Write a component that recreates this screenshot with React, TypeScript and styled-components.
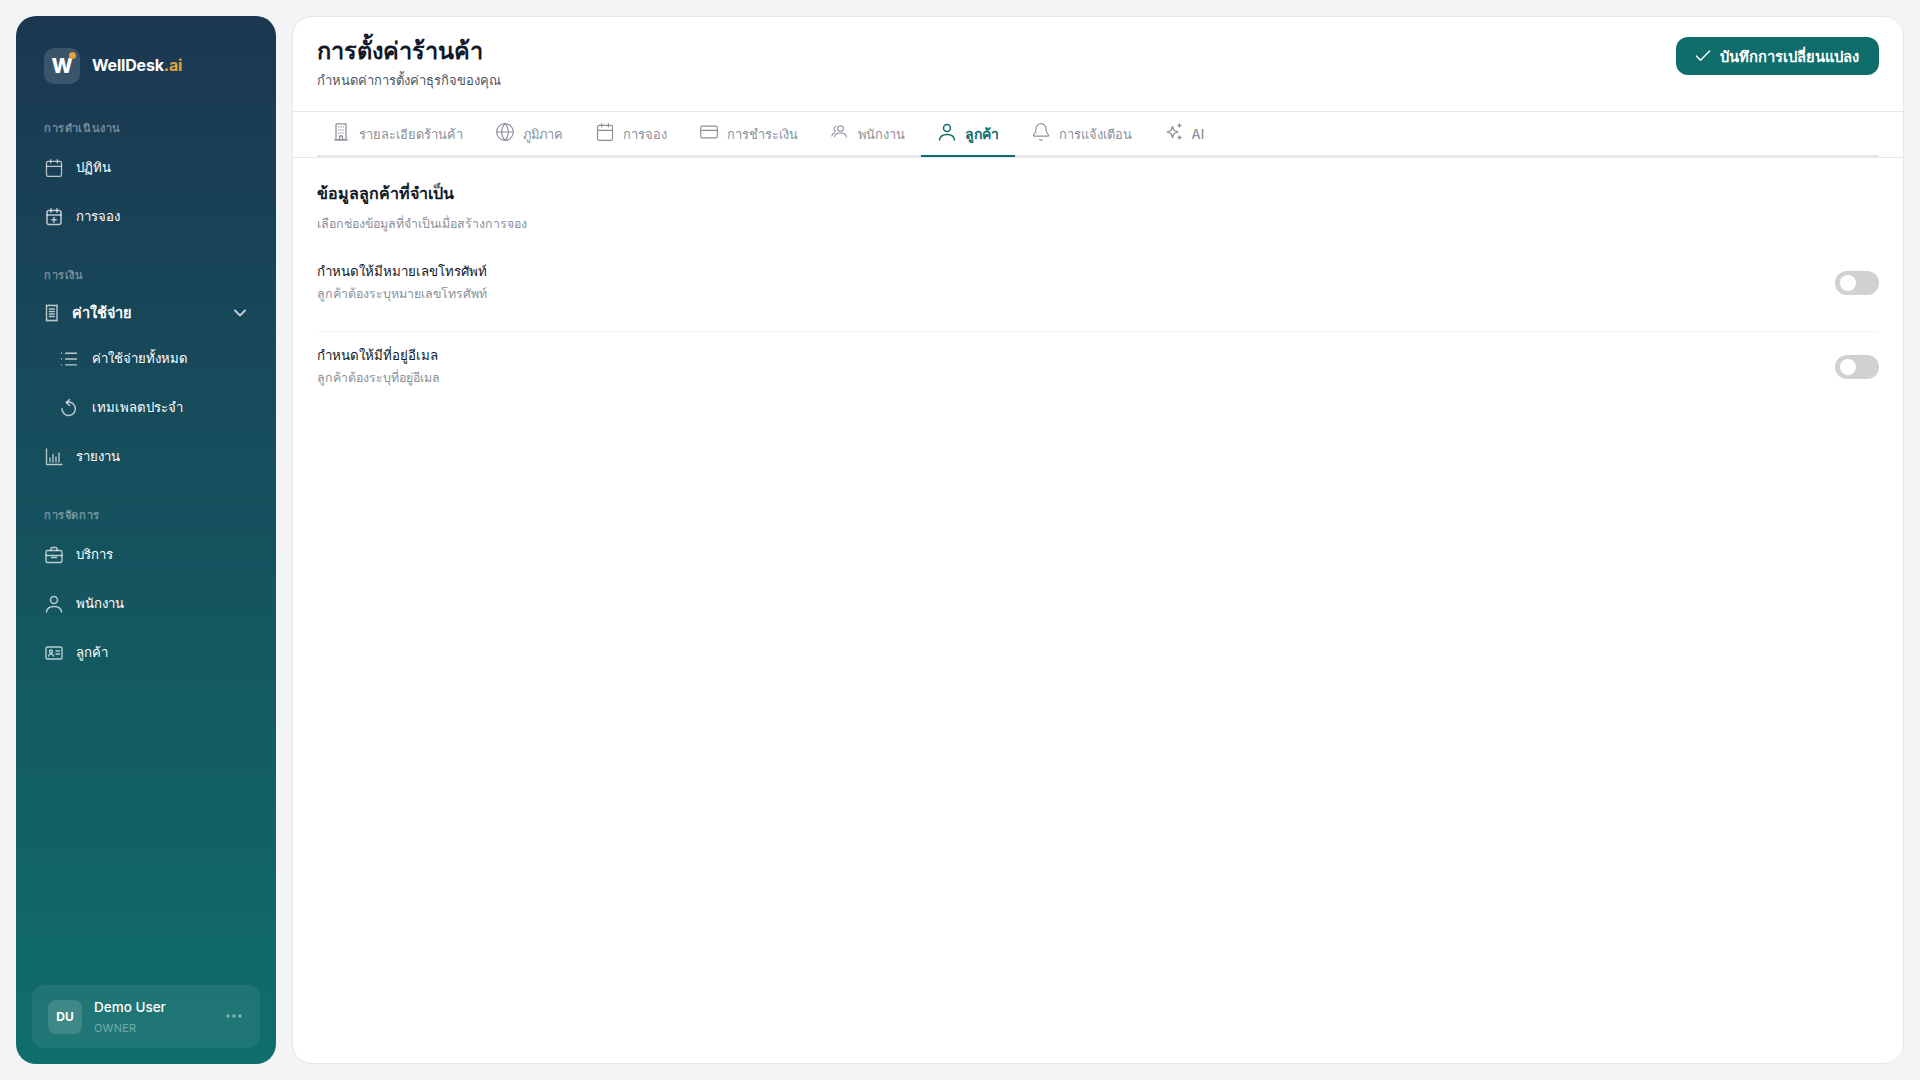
import React from "react";
import styled, { createGlobalStyle } from "styled-components";
import { Calendar, ChevronDown, List, Globe, CreditCard, Bell, Check, MoreHorizontal } from "lucide-react";

const Global = createGlobalStyle`
  * { box-sizing: border-box; }
  html, body { margin: 0; height: 100%; }
  body { background: #f3f4f6; font-family: Inter, "Noto Sans", sans-serif; }
`;

const Page = styled.div`
  display: flex;
  gap: 16px;
  height: 1080px;
  padding: 16px;
`;

const Sidebar = styled.aside`
  width: 260px;
  flex: none;
  border-radius: 20px;
  background: linear-gradient(180deg, #1b3751 0%, #0f6e6c 100%);
  display: flex;
  flex-direction: column;
  padding: 32px 16px 16px;
  color: #fff;
`;

const Brand = styled.div`
  display: flex;
  align-items: center;
  gap: 12px;
  padding-left: 12px;
  margin-bottom: 12px;
`;

const LogoBox = styled.div`
  position: relative;
  width: 36px;
  height: 36px;
  border-radius: 10px;
  background: rgba(255, 255, 255, 0.14);
  display: flex;
  align-items: center;
  justify-content: center;
  font-weight: 800;
  font-size: 20px;
  color: #fff;
`;

const LogoDot = styled.span`
  position: absolute;
  top: 4px;
  right: 4px;
  width: 7px;
  height: 7px;
  border-radius: 50%;
  background: #e0a33e;
`;

const BrandName = styled.div`
  font-size: 16px;
  font-weight: 700;
  letter-spacing: -0.2px;
  margin-top: -2px;
`;

const BrandAccent = styled.span`
  color: #e0a33e;
`;

const SectionLabel = styled.div`
  font-size: 11px;
  font-weight: 600;
  letter-spacing: 0.6px;
  color: rgba(255, 255, 255, 0.4);
  padding-left: 12px;
  margin: 22px 0 7px;
  line-height: 20px;
`;

const NavRow = styled.div<{ $sub?: boolean; $parent?: boolean }>`
  display: flex;
  align-items: center;
  height: ${(p) => (p.$parent ? "41px" : "45px")};
  margin-bottom: ${(p) => (p.$parent ? "3px" : "4px")};
  padding-left: ${(p) => (p.$sub ? "27px" : "12px")};
  gap: ${(p) => (p.$parent ? "8px" : p.$sub ? "13px" : "12px")};
  font-size: ${(p) => (p.$parent ? "14.5px" : "13.2px")};
  font-weight: ${(p) => (p.$parent ? 700 : 500)};
  color: #fff;
  & > svg:first-child {
    flex: none;
    color: rgba(255, 255, 255, 0.7);
  }
`;

const NavChevron = styled.span`
  margin-left: auto;
  margin-right: 10px;
  display: flex;
  color: rgba(255, 255, 255, 0.7);
`;

const UserCard = styled.div`
  margin-top: auto;
  height: 63px;
  border-radius: 12px;
  background: rgba(255, 255, 255, 0.07);
  display: flex;
  align-items: center;
  gap: 12px;
  padding: 0 16px;
`;

const Avatar = styled.div`
  width: 34px;
  height: 34px;
  border-radius: 8px;
  background: rgba(255, 255, 255, 0.14);
  display: flex;
  align-items: center;
  justify-content: center;
  font-size: 12px;
  font-weight: 700;
`;

const UserText = styled.div`
  flex: 1;
`;

const UserName = styled.div`
  font-size: 13.5px;
  font-weight: 500;
  line-height: 20px;
`;

const UserRole = styled.div`
  font-size: 11px;
  line-height: 18px;
  letter-spacing: 0.2px;
  color: rgba(255, 255, 255, 0.4);
  margin-top: 2px;
`;

const Dots = styled.span`
  display: flex;
  color: rgba(255, 255, 255, 0.45);
  margin-top: -2px;
`;

const Main = styled.main`
  flex: 1;
  background: #fff;
  border: 1px solid #e5e7eb;
  border-radius: 20px;
  display: flex;
  flex-direction: column;
  overflow: hidden;
`;

const Header = styled.header`
  height: 95px;
  flex: none;
  padding: 18px 24px 0;
  display: flex;
  justify-content: space-between;
  align-items: flex-start;
  border-bottom: 1px solid #e5e7eb;
`;

const Title = styled.h1`
  margin: 0;
  font-size: 23.5px;
  line-height: 32px;
  font-weight: 700;
  color: #111827;
`;

const Subtitle = styled.p`
  margin: 4px 0 0;
  font-size: 13px;
  line-height: 18px;
  color: #4b5563;
`;

const SaveButton = styled.button`
  width: 203px;
  height: 38px;
  margin-top: 2px;
  padding: 0 4px 0 0;
  border: none;
  border-radius: 12px;
  background: #0f6e6c;
  color: #fff;
  font: inherit;
  font-size: 14.7px;
  font-weight: 600;
  display: flex;
  align-items: center;
  justify-content: center;
  gap: 7px;
`;

const TabsBar = styled.div`
  flex: none;
  border-bottom: 1px solid #e5e7eb;
  height: 46px;
`;

const TabsRail = styled.div`
  display: flex;
  height: 45px;
  margin: 0 24px;
  border-bottom: 2px solid #e5e7eb;
`;

const Tab = styled.div<{ $active?: boolean }>`
  display: flex;
  align-items: center;
  gap: 8px;
  height: 45px;
  padding: 0 16px;
  font-size: ${(p) => (p.$active ? "14px" : "12.9px")};
  font-weight: ${(p) => (p.$active ? 700 : 500)};
  color: ${(p) => (p.$active ? "#0f6e6c" : "#8b919b")};
  border-bottom: 2px solid ${(p) => (p.$active ? "#0f6e6c" : "transparent")};
  &:first-child {
    margin-left: -2.5px;
  }
  & > svg {
    flex: none;
    margin-top: -3px;
  }
`;

const TabLabel = styled.span<{ $active?: boolean }>`
  padding-top: ${(p) => (p.$active ? "0" : "1px")};
`;

const Content = styled.section`
  padding: 23px 24px;
`;

const SectionTitle = styled.h2`
  margin: 0;
  font-size: 16px;
  line-height: 24px;
  font-weight: 700;
  color: #111827;
`;

const SectionDesc = styled.p`
  margin: 9px 0 14px;
  font-size: 12.4px;
  line-height: 20px;
  color: #8b919b;
`;

const SettingRow = styled.div<{ $last?: boolean }>`
  display: flex;
  align-items: center;
  justify-content: space-between;
  padding: 13px 0 ${(p) => (p.$last ? "13px" : "27px")};
  border-bottom: ${(p) => (p.$last ? "none" : "1px solid #f3f4f6")};
`;

const RowLabel = styled.div`
  font-size: 13.3px;
  line-height: 20px;
  font-weight: 500;
  color: #111827;
`;

const RowDesc = styled.div`
  font-size: 12.4px;
  line-height: 20px;
  margin-top: 3px;
  color: #8b919b;
`;

const Toggle = styled.div`
  width: 44px;
  height: 24px;
  border-radius: 12px;
  background: #d1d1d1;
  padding: 4px 0 4px 5px;
  flex: none;
`;

const Knob = styled.div`
  width: 16px;
  height: 16px;
  border-radius: 50%;
  background: #fff;
`;

type IconProps = { children: React.ReactNode; w?: number };

const Ico = ({ children, w = 1.5 }: IconProps) => (
  <svg width="20" height="20" viewBox="0 0 20 20" fill="none" stroke="currentColor" strokeWidth={w} strokeLinecap="round" strokeLinejoin="round">
    {children}
  </svg>
);

const CalendarPlusIcon = () => (
  <Ico>
    <rect x="3" y="3.5" width="14" height="14" rx="2" />
    <path d="M3 8h14M7 1.800v3.400M13 1.800v3.400M10 10.500v4.500M7.800 12.750h4.400" />
  </Ico>
);

const ReceiptIcon = () => (
  <Ico w={1.4}>
    <path d="M2.500 2l1.200.9L5 2l1.300.9L7.700 2l1.300.9L10.300 2l1.300.9L13 2v16l-1.400-.9-1.300.9-1.300-.9-1.300.9-1.400-.9L5 18l-1.300-.9L2.500 18z" />
    <path d="M5.300 6h5M5.300 8.500h5M5.300 11h5M5.300 13.500h5" />
  </Ico>
);

const UndoIcon = () => (
  <Ico w={1.5}>
    <path d="M7.500 4.500a6.700 6.700 0 1 1-4.500 6.300" />
    <path d="M10.500 1.500L7.500 4.500l3 3" />
  </Ico>
);

const ChartIcon = () => (
  <Ico w={1.3}>
    <path d="M2.500 2v15.500h15.500" />
    <path d="M6 15v-4M9 15V7.500M12 15v-5M15 15V6" />
  </Ico>
);

const CaseIcon = () => (
  <Ico w={1.4}>
    <rect x="2" y="5.500" width="16" height="12" rx="1.500" />
    <path d="M7 5.500V3.500a1 1 0 0 1 1-1h4a1 1 0 0 1 1 1v2M2 10.500h16M7.500 12.500h5" />
  </Ico>
);

const IdIcon = () => (
  <Ico w={1.4}>
    <rect x="2" y="4" width="16" height="12" rx="1.200" />
    <circle cx="7" cy="8.500" r="1.500" />
    <path d="M4.500 13c.3-1.400 1.200-2 2.500-2s2.200.6 2.500 2M12 8h3.500M12 11h3.500" />
  </Ico>
);

const PersonIcon = () => (
  <Ico w={1.5}>
    <circle cx="10" cy="6" r="3.500" />
    <path d="M2.500 18c.4-3.600 3.400-5.500 7.500-5.500s7.100 1.900 7.500 5.500" />
  </Ico>
);

const BuildingIcon = () => (
  <Ico w={1.3}>
    <rect x="5" y="1.800" width="10" height="16" rx=".4" />
    <path d="M3.500 17.800h13M7.800 5h.01M10 5h.01M12.200 5h.01M7.800 8h.01M10 8h.01M12.200 8h.01M7.800 11h.01M10 11h.01M12.200 11h.01M8.500 17.500v-3.500h3v3.500" />
  </Ico>
);

const TeamIcon = () => (
  <Ico w={1.1}>
    <circle cx="10.500" cy="6.500" r="2.800" />
    <path d="M4.500 15c.5-2.800 3-4 6-4s5.500 1.200 6 4M6.200 4.300a2.600 2.600 0 0 0-.5 5M1.800 14c.3-1.800 1.400-2.900 3-3.300" />
  </Ico>
);

const SparkleIcon = () => (
  <Ico w={1.3}>
    <path d="M8.500 4.500l1.500 4 4 1.500-4 1.500-1.500 4-1.500-4-4-1.500 4-1.500z" />
    <path d="M15.500 2v3M14 3.500h3M15.500 14v3M14 15.500h3" />
  </Ico>
);

const tabs = [
  { label: "รายละเอียดร้านค้า", icon: <BuildingIcon /> },
  { label: "ภูมิภาค", icon: <Globe size={20} strokeWidth={1.4} /> },
  { label: "การจอง", icon: <Calendar size={20} strokeWidth={1.4} /> },
  { label: "การชำระเงิน", icon: <CreditCard size={20} strokeWidth={1.4} /> },
  { label: "พนักงาน", icon: <TeamIcon /> },
  { label: "ลูกค้า", icon: <PersonIcon />, active: true },
  { label: "การแจ้งเตือน", icon: <Bell size={20} strokeWidth={1.4} /> },
  { label: "AI", icon: <SparkleIcon /> },
];

export default function App() {
  return (
    <>
      <Global />
      <Page>
        <Sidebar>
          <Brand>
            <LogoBox>
              W
              <LogoDot />
            </LogoBox>
            <BrandName>
              WellDesk<BrandAccent>.ai</BrandAccent>
            </BrandName>
          </Brand>
          <SectionLabel>การดำเนินงาน</SectionLabel>
          <NavRow>
            <Calendar size={20} strokeWidth={1.5} />
            ปฏิทิน
          </NavRow>
          <NavRow>
            <CalendarPlusIcon />
            การจอง
          </NavRow>
          <SectionLabel>การเงิน</SectionLabel>
          <NavRow $parent>
            <ReceiptIcon />
            ค่าใช้จ่าย
            <NavChevron>
              <ChevronDown size={20} strokeWidth={2.4} />
            </NavChevron>
          </NavRow>
          <NavRow $sub>
            <List size={20} strokeWidth={1.7} />
            ค่าใช้จ่ายทั้งหมด
          </NavRow>
          <NavRow $sub>
            <UndoIcon />
            เทมเพลตประจำ
          </NavRow>
          <NavRow>
            <ChartIcon />
            รายงาน
          </NavRow>
          <SectionLabel>การจัดการ</SectionLabel>
          <NavRow>
            <CaseIcon />
            บริการ
          </NavRow>
          <NavRow>
            <PersonIcon />
            พนักงาน
          </NavRow>
          <NavRow>
            <IdIcon />
            ลูกค้า
          </NavRow>
          <UserCard>
            <Avatar>DU</Avatar>
            <UserText>
              <UserName>Demo User</UserName>
              <UserRole>OWNER</UserRole>
            </UserText>
            <Dots>
              <MoreHorizontal size={20} />
            </Dots>
          </UserCard>
        </Sidebar>
        <Main>
          <Header>
            <div>
              <Title>การตั้งค่าร้านค้า</Title>
              <Subtitle>กำหนดค่าการตั้งค่าธุรกิจของคุณ</Subtitle>
            </div>
            <SaveButton>
              <Check size={20} strokeWidth={1.6} />
              บันทึกการเปลี่ยนแปลง
            </SaveButton>
          </Header>
          <TabsBar>
            <TabsRail>
              {tabs.map((t) => (
                <Tab key={t.label} $active={t.active}>
                  {t.icon}
                  <TabLabel $active={t.active}>{t.label}</TabLabel>
                </Tab>
              ))}
            </TabsRail>
          </TabsBar>
          <Content>
            <SectionTitle>ข้อมูลลูกค้าที่จำเป็น</SectionTitle>
            <SectionDesc>เลือกช่องข้อมูลที่จำเป็นเมื่อสร้างการจอง</SectionDesc>
            <SettingRow>
              <div>
                <RowLabel>กำหนดให้มีหมายเลขโทรศัพท์</RowLabel>
                <RowDesc>ลูกค้าต้องระบุหมายเลขโทรศัพท์</RowDesc>
              </div>
              <Toggle><Knob /></Toggle>
            </SettingRow>
            <SettingRow $last>
              <div>
                <RowLabel>กำหนดให้มีที่อยู่อีเมล</RowLabel>
                <RowDesc>ลูกค้าต้องระบุที่อยู่อีเมล</RowDesc>
              </div>
              <Toggle><Knob /></Toggle>
            </SettingRow>
          </Content>
        </Main>
      </Page>
    </>
  );
}
